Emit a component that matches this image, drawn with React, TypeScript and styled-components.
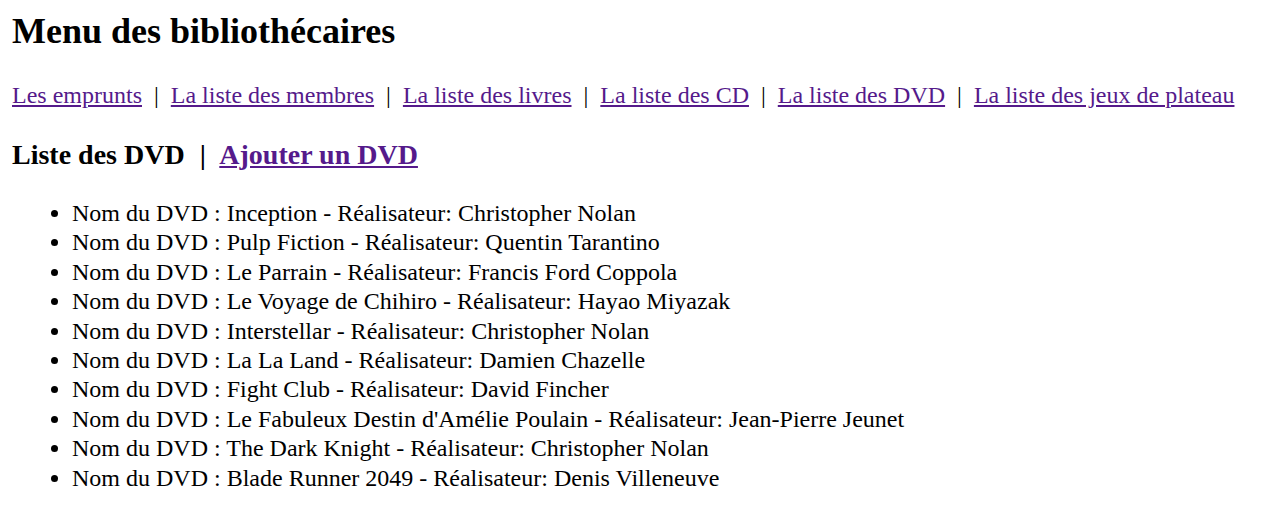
import React from "react";
import styled, { createGlobalStyle } from "styled-components";

const Global = createGlobalStyle`
  html, body {
    margin: 0;
    padding: 0;
    background: #ffffff;
  }
  body {
    font-family: "Liberation Serif", "Times New Roman", serif;
    font-size: 24px;
    color: #000000;
  }
`;

const Page = styled.main`
  padding: 0 12px;
  display: flow-root;
`;

const Title = styled.h1`
  font-size: 36px;
  font-weight: bold;
  margin: 10px 0 30px;
`;

const Nav = styled.p`
  margin: 0 0 24px;
`;

const NavLink = styled.a`
  color: #551a8b;
  text-decoration: underline;
`;

const SectionTitle = styled.h3`
  font-size: 28px;
  font-weight: bold;
  margin: 30px 0 28px;
`;

const Separator = styled.span`
  margin: 0 1px;
`;

const TitleLink = styled.a`
  color: #551a8b;
  text-decoration: underline;
`;

const List = styled.ul`
  margin: 0;
  padding-left: 60px;
  list-style: disc;
`;

const Item = styled.li`
  line-height: 29.4px;
`;

const links = [
  "Les emprunts",
  "La liste des membres",
  "La liste des livres",
  "La liste des CD",
  "La liste des DVD",
  "La liste des jeux de plateau",
];

const dvds: [string, string][] = [
  ["Inception", "Christopher Nolan"],
  ["Pulp Fiction", "Quentin Tarantino"],
  ["Le Parrain", "Francis Ford Coppola"],
  ["Le Voyage de Chihiro", "Hayao Miyazak"],
  ["Interstellar", "Christopher Nolan"],
  ["La La Land", "Damien Chazelle"],
  ["Fight Club", "David Fincher"],
  ["Le Fabuleux Destin d'Amélie Poulain", "Jean-Pierre Jeunet"],
  ["The Dark Knight", "Christopher Nolan"],
  ["Blade Runner 2049", "Denis Villeneuve"],
];

export default function App() {
  return (
    <>
      <Global />
      <Page>
        <Title>Menu des bibliothécaires</Title>
        <Nav>
          {links.map((l, i) => (
            <React.Fragment key={l}>
              {i > 0 && " \u00a0|\u00a0 "}
              <NavLink href="#">{l}</NavLink>
            </React.Fragment>
          ))}
        </Nav>
        <SectionTitle>
          Liste des DVD {"\u00a0"}<Separator>|</Separator>{"\u00a0"} <TitleLink href="#">Ajouter un DVD</TitleLink>
        </SectionTitle>
        <List>
          {dvds.map(([n, r]) => (
            <Item key={n}>
              Nom du DVD : {n} - Réalisateur: {r}
            </Item>
          ))}
        </List>
      </Page>
    </>
  );
}
